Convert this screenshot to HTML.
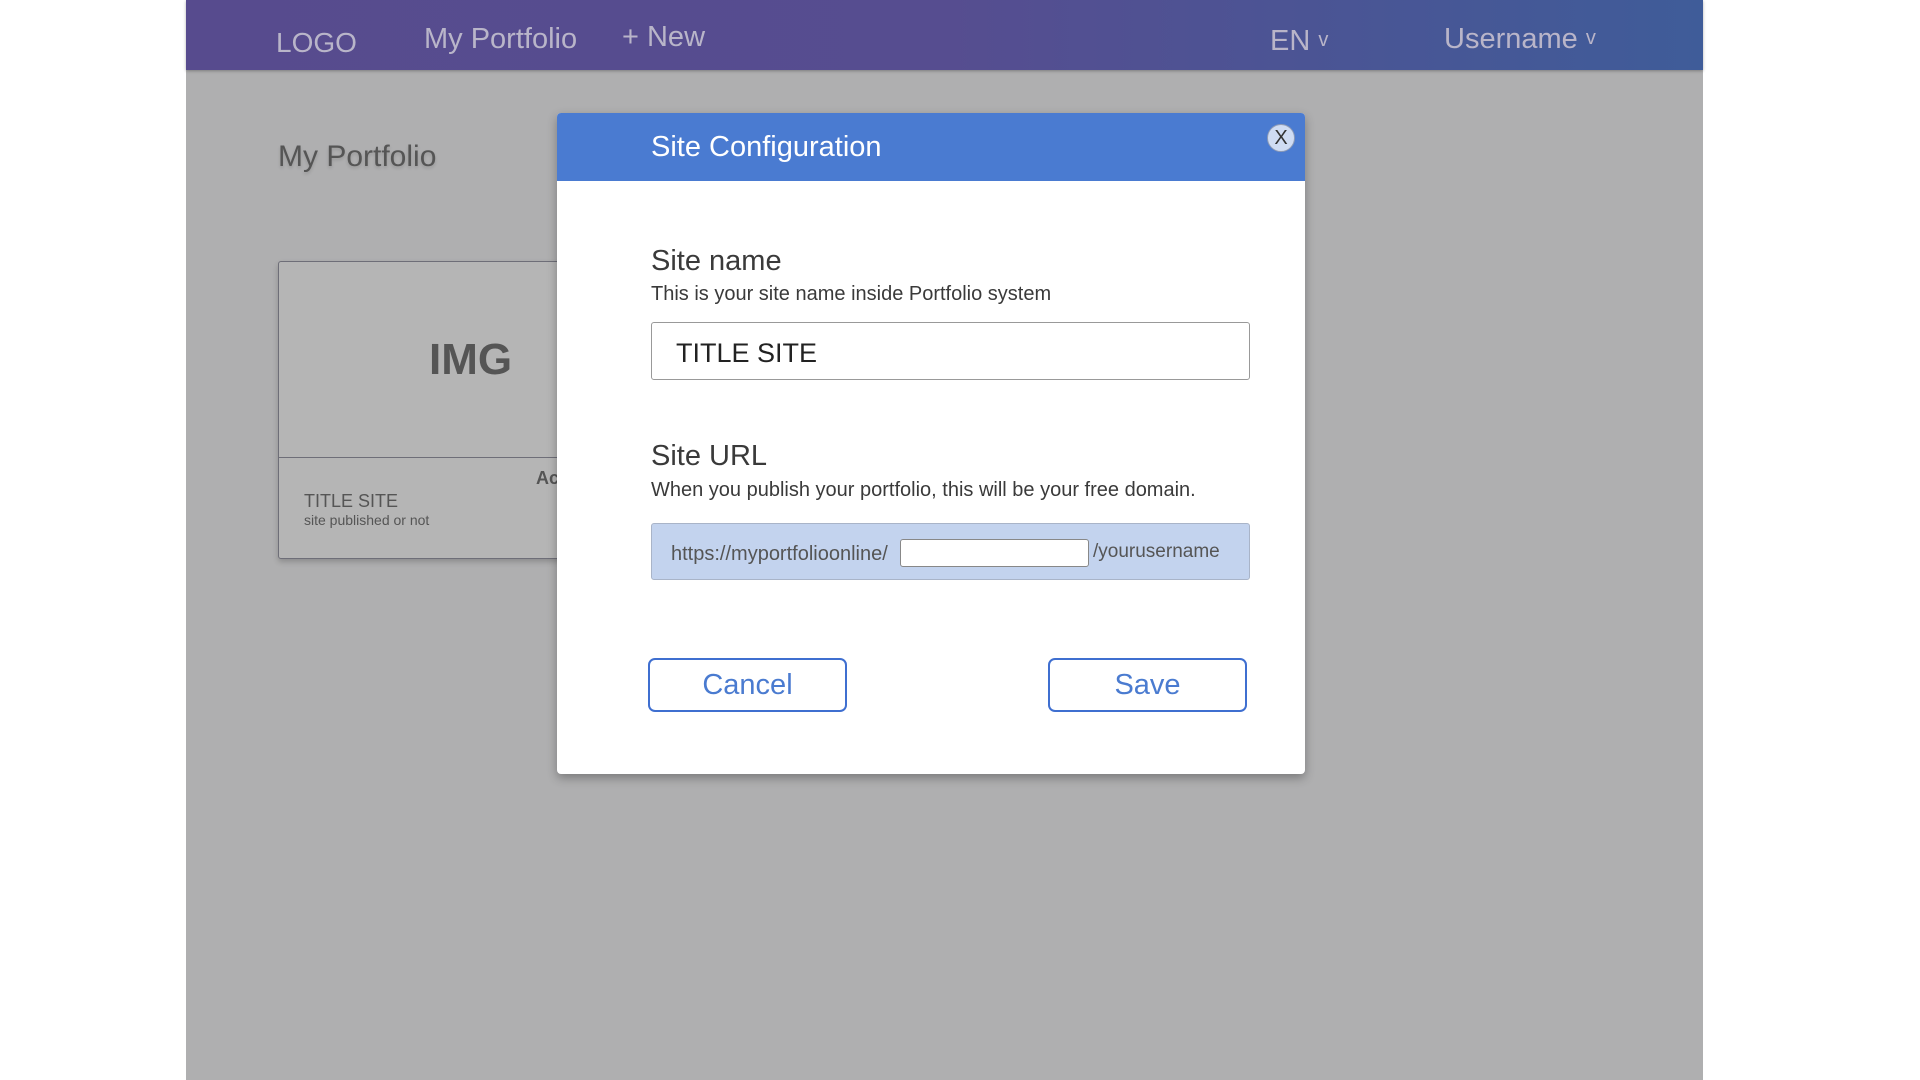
<!DOCTYPE html>
<html><head><meta charset="utf-8">
<style>
*{margin:0;padding:0;box-sizing:border-box}
body{width:1920px;height:1080px;background:#fff;position:relative;overflow:hidden;font-family:"Liberation Sans",sans-serif}
.abs{position:absolute;white-space:nowrap}
.gray{left:186px;top:0;width:1517px;height:1080px;background:#afafb0}
.hdr{left:186px;top:0;width:1517px;height:70px;background:linear-gradient(90deg,#574b8e 0%,#564d90 50%,#3f5c99 100%);box-shadow:0 1px 3px rgba(0,0,0,.3)}
.nav{color:#b9b5c9;font-size:29px;top:23px}
.card{left:278px;top:261px;width:400px;height:298px;background:#b5b5b5;border:1.5px solid #6e6e78;border-radius:3px;box-shadow:0 3px 6px rgba(0,0,0,.2)}
.modal{left:557px;top:113px;width:748px;height:661px;background:#fff;border-radius:4px;box-shadow:0 4px 10px rgba(0,0,0,.3);overflow:hidden}
.mh{left:0;top:0;width:748px;height:68px;background:#4a7bd1}
.lbl{color:#3a3a3a;font-size:29px}
.desc{color:#3a3a3a;font-size:20px}
.btn{border:2px solid #3f6fd0;border-radius:7px;color:#4a7bd0;font-size:29px;text-align:center;line-height:50px;height:54px;width:199px}
</style></head><body>
<div class="abs gray"></div>
<div class="abs" style="left:278px;top:140px;font-size:30px;color:#555;text-shadow:0 2px 3px rgba(0,0,0,.15)">My Portfolio</div>
<div class="abs card">
  <div class="abs" style="left:0;top:195px;width:400px;border-top:1.5px solid #6e6e78"></div>
  <div class="abs" style="left:150px;top:73px;font-size:44px;font-weight:bold;color:#555">IMG</div>
  <div class="abs" style="left:257px;top:206px;font-size:18px;font-weight:bold;color:#555">Ac</div>
  <div class="abs" style="left:25px;top:229px;font-size:18px;color:#555">TITLE SITE</div>
  <div class="abs" style="left:25px;top:250px;font-size:14px;color:#555">site published or not</div>
</div>
<div class="abs hdr"></div>
<div class="abs nav" style="left:276px;top:27px;font-size:28px">LOGO</div>
<div class="abs nav" style="left:424px">My Portfolio</div>
<div class="abs nav" style="left:622px;top:21px">+ New</div>
<div class="abs nav" style="left:1270px;top:25px">EN <span style="font-size:20px;vertical-align:4px">v</span></div>
<div class="abs nav" style="left:1444px;top:23px">Username <span style="font-size:20px;vertical-align:4px">v</span></div>

<div class="abs modal">
  <div class="abs mh"></div>
  <div class="abs" style="left:94px;top:18px;color:#fff;font-size:29px">Site Configuration</div>
  <div class="abs" style="left:710px;top:11px;width:28px;height:28px;border-radius:50%;background:#cfdcf3;border:1px solid #8e9bb5;color:#333;font-size:20px;text-align:center;line-height:26px">X</div>
  <div class="abs lbl" style="left:94px;top:132px">Site name</div>
  <div class="abs desc" style="left:94px;top:170px">This is your site name inside Portfolio system</div>
  <div class="abs" style="left:94px;top:209px;width:599px;height:58px;border:1.5px solid #999;border-radius:3px"></div>
  <div class="abs" style="left:119px;top:225px;font-size:27px;color:#222">TITLE SITE</div>
  <div class="abs lbl" style="left:94px;top:327px">Site URL</div>
  <div class="abs desc" style="left:94px;top:366px">When you publish your portfolio, this will be your free domain.</div>
  <div class="abs" style="left:94px;top:410px;width:599px;height:57px;background:#c3d3ee;border:1px solid #a9b4c8;border-radius:3px"></div>
  <div class="abs" style="left:114px;top:430px;font-size:20px;color:#555">https://myportfolioonline/</div>
  <div class="abs" style="left:343px;top:426px;width:189px;height:28px;background:#fff;border:1px solid #888;border-radius:3px"></div>
  <div class="abs" style="left:536px;top:428px;font-size:19px;color:#555">/yourusername</div>
  <div class="abs btn" style="left:91px;top:545px">Cancel</div>
  <div class="abs btn" style="left:491px;top:545px">Save</div>
</div>
</body></html>
